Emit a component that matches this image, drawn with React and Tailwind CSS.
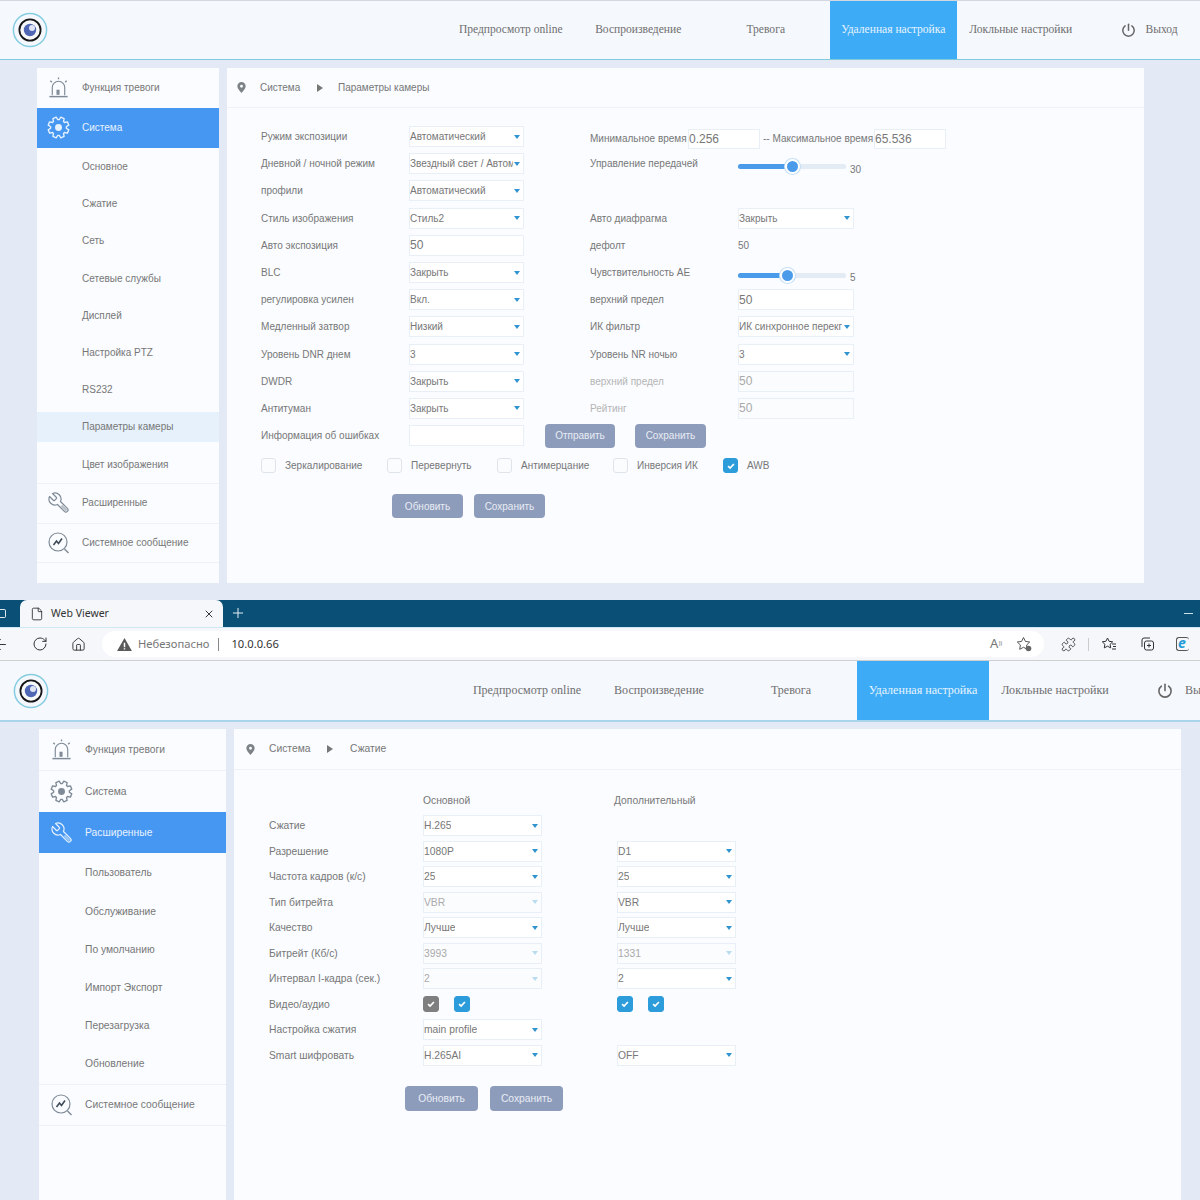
import React from 'react';
import { ArrowLeft, RotateCw, House, File, X, Plus, Puzzle } from 'lucide-react';

const SANS = "font-['Liberation_Sans',Arial,sans-serif]";

// 8 tooth gear outline, generated once
const gearPoints = (() => {
    const pts = [];
    for (let i = 0; i < 8; i++) {
        const a = (i * Math.PI) / 4 + Math.PI / 8;
        [[-0.3, 8.2], [-0.17, 11], [0.17, 11], [0.3, 8.2]].forEach(([d, r]) => {
            pts.push(`${(12 + r * Math.cos(a + d)).toFixed(2)},${(12 + r * Math.sin(a + d)).toFixed(2)}`);
        });
    }
    return pts.join(' ');
})();

function Logo() {
    return (
        <svg viewBox="0 0 36 36" className="w-[36px] h-[36px]">
            <circle cx="18" cy="18" r="16.6" fill="#f4f8fc" stroke="#86cde2" strokeWidth="1.5" />
            <circle cx="18" cy="18" r="10.6" fill="#f7f8fa" stroke="#161618" strokeWidth="1.8" />
            <circle cx="18" cy="18" r="6.2" fill="#4f66b4" />
            <circle cx="20" cy="16" r="3" fill="#dfe5f3" />
        </svg>
    );
}

function AlarmIcon() {
    return (
        <svg viewBox="0 0 24 24" fill="none" stroke="currentColor" strokeWidth="1.2" className="w-[23px] h-[23px]">
            <path d="M5.5 20V12a6.5 6.5 0 0 1 13 0v8" />
            <path d="M2.5 21.5h19" strokeWidth="1.5" />
            <path d="M10.5 19v-4h2v4z" fill="currentColor" />
            <path d="M12 1.5v2M3.5 5l1.5 1.5M20.5 5L19 6.5" strokeWidth="1.4" />
        </svg>
    );
}

function GearIcon() {
    return (
        <svg viewBox="0 0 24 24" fill="none" stroke="currentColor" strokeWidth="1.4" strokeLinejoin="round" className="w-[23px] h-[23px]">
            <polygon points={gearPoints} />
            <circle cx="12" cy="12" r="3.6" fill="currentColor" stroke="none" />
        </svg>
    );
}

function WrenchIcon() {
    return (
        <svg viewBox="0 0 24 24" fill="none" stroke="currentColor" strokeWidth="1.2" strokeLinejoin="round" className="w-[24px] h-[24px]">
            <g transform="translate(24 0) scale(-1 1)">
                <path d="M14.7 6.3a1 1 0 0 0 0 1.4l1.6 1.6a1 1 0 0 0 1.4 0l3.77-3.77a6 6 0 0 1-7.94 7.94l-6.91 6.91a2.12 2.12 0 0 1-3-3l6.91-6.91a6 6 0 0 1 7.94-7.94l-3.76 3.76z" />
                <path d="M9.5 14.5l-5 5" strokeWidth="2.2" opacity="0.55" />
            </g>
        </svg>
    );
}

function MessageIcon() {
    return (
        <svg viewBox="0 0 24 24" fill="none" stroke="currentColor" strokeWidth="1.2" className="w-[24px] h-[24px]">
            <circle cx="11" cy="11" r="9" />
            <path d="M17.5 18l4 4" strokeWidth="1.5" />
            <path d="M6.5 14l3-4 2 2.5 3.5-5" stroke="#3f4a58" strokeWidth="1.6" />
        </svg>
    );
}

function PowerIcon({ className }) {
    return (
        <svg viewBox="0 0 16 16" fill="none" stroke="#666" strokeWidth="1.6" strokeLinecap="round" className={className}>
            <path d="M8 1.2v6.4" />
            <path d="M4.4 3.1a6.1 6.1 0 1 0 7.2 0" />
        </svg>
    );
}

function Pin() {
    return (
        <svg viewBox="0 0 10 12" className="w-[9px] h-[11px]">
            <path fillRule="evenodd" d="M5 0a4.6 4.6 0 0 1 4.6 4.6C9.6 7.6 5 12 5 12S.4 7.6.4 4.6A4.6 4.6 0 0 1 5 0zm0 3a1.6 1.6 0 1 0 0 3.2A1.6 1.6 0 0 0 5 3z" fill="#7d8287" />
        </svg>
    );
}

function Breadcrumb({ className, current, nameClass, arrowClass }) {
    return (
        <div className={`flex items-center border-b border-[#eef2f8] text-[#777] ${className}`}>
            <Pin />
            <span className={`ml-[14px] ${nameClass}`}>Система</span>
            <div className={`border-y-[4px] border-l-[6px] border-y-transparent border-l-[#777] ${arrowClass}`} />
            <span>{current}</span>
        </div>
    );
}

function TopNav({ className, startClass, itemClass, textClass, exitClass, powerClass, exit }) {
    const items = ['Предпросмотр online', 'Воспроизведение', 'Тревога', 'Удаленная настройка', 'Локльные настройки'];
    return (
        <div className={`flex items-stretch bg-[#f5f8fd] font-['Liberation_Serif','Times_New_Roman',serif] ${textClass} ${className}`}>
            <div className={`flex items-center shrink-0 ${startClass}`}>
                <Logo />
            </div>
            {items.map((item, i) => (
                <div
                    key={item}
                    className={`flex items-center justify-center shrink-0 whitespace-nowrap ${itemClass} ${i === 3 ? 'bg-[#3eabf6] text-[#e8f4fe]' : 'text-[#6f6f6f]'}`}
                >
                    {item}
                </div>
            ))}
            <div className={`flex items-center shrink-0 text-[#6f6f6f] whitespace-nowrap ${exitClass}`}>
                <PowerIcon className={powerClass} />
                <span>{exit}</span>
            </div>
        </div>
    );
}

function SideRow({ icon, label, active, className }) {
    return (
        <div className={`flex items-center ${className} ${active ? 'bg-[#4697f2] text-[#e6f2ff]' : 'text-[#777]'}`}>
            <div className={`flex justify-center shrink-0 w-[43px] mr-[2px] ${active ? 'text-[#e6f2ff]' : 'text-[#7f8a96]'}`}>{icon}</div>
            <span>{label}</span>
        </div>
    );
}

function SubRow({ label, selected, className }) {
    return (
        <div className={`flex items-center ${className}`}>
            <div className={`flex items-center w-full h-[30px] pl-[45px] text-[#777] ${selected ? 'bg-[#e6f1fb]' : ''}`}>{label}</div>
        </div>
    );
}

function Select({ value, disabled, className }) {
    return (
        <div className={`flex items-center justify-between border border-[#e8eff6] pr-[3px] shrink-0 ${disabled ? 'bg-[#fbfcfe] text-[#aaa]' : 'bg-white text-[#777]'} ${className}`}>
            <span className="whitespace-nowrap overflow-hidden">{value}</span>
            <div className={`ml-[1px] shrink-0 border-x-[3px] border-t-[4px] border-x-transparent ${disabled ? 'border-t-[#b9dcf0]' : 'border-t-[#2f94d0]'}`} />
        </div>
    );
}

function Input({ value, disabled, className }) {
    return (
        <div className={`flex items-center border border-[#e8eff6] shrink-0 text-[12px] ${disabled ? 'bg-[#fbfcfe] text-[#aaa]' : 'bg-white text-[#777]'} ${className}`}>
            {value}
        </div>
    );
}

function Slider({ pct, value, valueClass }) {
    return (
        <div className="flex items-center mt-[6px]">
            <div className="relative w-[108px] h-[5px] rounded-full bg-[#e3ebf5]">
                <div className="h-full rounded-full bg-[#4a9bea]" style={{ width: `${pct}%` }} />
                <div
                    className="absolute top-[-5px] w-[15px] h-[15px] -ml-[7px] rounded-full bg-[#4a9bea] border-[2px] border-white shadow-[0_0_0_1px_#c4def5]"
                    style={{ left: `${pct}%` }}
                />
            </div>
            <span className={`ml-[4px] text-[#777] ${valueClass}`}>{value}</span>
        </div>
    );
}

function Check({ on, gray, className }) {
    const color = gray ? 'bg-[#7f7f7f] border-[#7f7f7f]' : on ? 'bg-[#2d9cdb] border-[#2d9cdb]' : 'bg-[#fbfcfe] border-[#dfe4ea]';
    return (
        <div className={`flex items-center justify-center rounded-[3px] border shrink-0 ${color} ${className}`}>
            {on && (
                <svg viewBox="0 0 12 12" fill="none" stroke="#fff" strokeWidth="2" className="w-[10px] h-[10px]">
                    <path d="M2.5 6.2l2.4 2.4 4.6-5" />
                </svg>
            )}
        </div>
    );
}

function Btn({ label, className }) {
    return (
        <div className={`flex items-center justify-center rounded-[4px] bg-[#8e9cbb] text-[#e8ecf4] shrink-0 ${className}`}>{label}</div>
    );
}

const topRows = [
    ['Дневной / ночной режим', 'Звездный свет / Автом', 'Управление передачей', <Slider pct={50} value="30" valueClass="mt-[6px]" />],
    ['профили', 'Автоматический', '', null],
    ['Стиль изображения', 'Стиль2', 'Авто диафрагма', 'Закрыть'],
    ['Авто экспозиция', { input: '50' }, 'дефолт', { text: '50' }],
    ['BLC', 'Закрыть', 'Чувствительность АЕ', <Slider pct={45} value="5" valueClass="mt-[4px]" />],
    ['регулировка усилен', 'Вкл.', 'верхний предел', { input: '50' }],
    ['Медленный затвор', 'Низкий', 'ИК фильтр', 'ИК синхронное перекг'],
    ['Уровень DNR днем', '3', 'Уровень NR ночью', '3'],
    ['DWDR', 'Закрыть', 'верхний предел', { input: '50', disabled: true }],
    ['Антитуман', 'Закрыть', 'Рейтинг', { input: '50', disabled: true }],
];

function TopControl({ c }) {
    if (c === null) return null;
    if (typeof c === 'string') return <Select value={c} className="w-[116px] h-[21px]" />;
    if (c.input) return <Input value={c.input} disabled={c.disabled} className="w-[116px] h-[21px]" />;
    if (c.text) return <span className="text-[#777]">{c.text}</span>;
    return c;
}

function CameraForm() {
    return (
        <div className="pt-[15px] pl-[34px] text-[10px] text-[#777]">
            <div className="flex items-center h-[27.2px]">
                <div className="w-[148px]">Ружим экспозиции</div>
                <Select value="Автоматический" className="w-[115px] h-[21px]" />
                <div className="flex items-center ml-[66px] mt-[4px] whitespace-nowrap">
                    <span className="w-[98px]">Минимальное время</span>
                    <Input value="0.256" className="w-[72px] h-[20px]" />
                    <span className="ml-[3px] w-[111px]">-- Максимальное время</span>
                    <Input value="65.536" className="w-[72px] h-[20px]" />
                </div>
            </div>
            {topRows.map(([label, ctrl, rightLabel, rightCtrl], i) => (
                <div key={i} className="flex items-center h-[27.2px]">
                    <div className="w-[148px]">{label}</div>
                    {typeof ctrl === 'string' ? (
                        <Select value={ctrl} className="w-[115px] h-[21px]" />
                    ) : (
                        <Input value={ctrl.input} className="w-[115px] h-[21px]" />
                    )}
                    <div className={`ml-[66px] w-[148px] ${i > 7 ? 'text-[#b5b5b5]' : ''}`}>{rightLabel}</div>
                    <TopControl c={rightCtrl} />
                </div>
            ))}
            <div className="flex items-center h-[27.2px]">
                <div className="w-[148px]">Информация об ошибках</div>
                <Input value="" className="w-[115px] h-[21px]" />
                <Btn label="Отправить" className="ml-[21px] w-[70px] h-[24px]" />
                <Btn label="Сохранить" className="ml-[20px] w-[71px] h-[24px]" />
            </div>
            <div className="flex items-center mt-[3px] h-[27px]">
                <Check className="w-[15px] h-[15px]" />
                <span className="ml-[9px] w-[102px]">Зеркалирование</span>
                <Check className="w-[15px] h-[15px]" />
                <span className="ml-[9px] w-[86px]">Перевернуть</span>
                <Check className="w-[15px] h-[15px]" />
                <span className="ml-[9px] w-[92px]">Антимерцание</span>
                <Check className="w-[15px] h-[15px]" />
                <span className="ml-[9px] w-[86px]">Инверсия ИК</span>
                <Check on className="w-[15px] h-[15px]" />
                <span className="ml-[9px]">AWB</span>
            </div>
            <div className="flex mt-[15px] ml-[131px] gap-[11px]">
                <Btn label="Обновить" className="w-[71px] h-[24px]" />
                <Btn label="Сохранить" className="w-[71px] h-[24px]" />
            </div>
        </div>
    );
}

const lowerRows = [
    ['Сжатие', 'H.265', false, ''],
    ['Разрешение', '1080P', false, 'D1'],
    ['Частота кадров (к/с)', '25', false, '25'],
    ['Тип битрейта', 'VBR', true, 'VBR'],
    ['Качество', 'Лучше', false, 'Лучше'],
    ['Битрейт (Кб/с)', '3993', true, '1331', true],
    ['Интервал I-кадра (сек.)', '2', true, '2'],
    ['Видео/аудио', 'checks', false, 'checks'],
    ['Настройка сжатия', 'main profile', false, ''],
    ['Smart шифровать', 'H.265AI', false, 'OFF'],
];

function CompressForm() {
    return (
        <div className="pl-[35px] text-[10.3px] text-[#777]">
            <div className="flex h-[21px] mt-[20px] mb-[2px] items-center">
                <span className="ml-[154px] w-[191px]">Основной</span>
                <span>Дополнительный</span>
            </div>
            {lowerRows.map(([label, first, firstOff, second, secondOff]) => (
                <div key={label} className="flex items-center h-[25.5px]">
                    <div className="w-[154px]">{label}</div>
                    {first === 'checks' ? (
                        <div className="flex w-[119px] gap-[15px]">
                            <Check on gray className="w-[16px] h-[16px]" />
                            <Check on className="w-[16px] h-[16px]" />
                        </div>
                    ) : (
                        <Select value={first} disabled={firstOff} className="w-[119px] h-[21px]" />
                    )}
                    <div className="w-[75px]" />
                    {second === 'checks' ? (
                        <div className="flex gap-[15px]">
                            <Check on className="w-[16px] h-[16px]" />
                            <Check on className="w-[16px] h-[16px]" />
                        </div>
                    ) : second ? (
                        <Select value={second} disabled={secondOff} className="w-[119px] h-[21px]" />
                    ) : null}
                </div>
            ))}
            <div className="flex mt-[18px] ml-[136px] gap-[12px]">
                <Btn label="Обновить" className="w-[73px] h-[25px]" />
                <Btn label="Сохранить" className="w-[73px] h-[25px]" />
            </div>
        </div>
    );
}

function BrowserChrome() {
    return (
        <div className="shrink-0 font-['Noto_Sans',sans-serif]">
            <div className="flex items-stretch h-[27px] bg-[#0a4f75] relative">
                <div className="w-[6px] h-[9px] mt-[9px] border-y-[1.5px] border-r-[1.5px] border-[#dbe8f0] rounded-r-[2px]" />
                <div className="flex items-center ml-[14px] w-[203px] rounded-t-[7px] bg-[#f5f7fa] pl-[10px] pr-[8px] text-[10.5px] text-[#333]">
                    <File size={14} strokeWidth={1.4} className="text-[#222]" />
                    <span className="ml-[7px] flex-1">Web Viewer</span>
                    <X size={12} strokeWidth={1.8} className="text-[#222]" />
                </div>
                <Plus size={16} strokeWidth={1.5} className="ml-[7px] mt-[5px] text-[#e4eff6]" />
                <div className="ml-auto mr-[7px] mt-[13px] w-[9px] h-[1px] bg-[#cfe0ea]" />
            </div>
            <div className="flex items-center h-[34px] bg-[#f5f7fa] border-t border-[#cfe6f4] border-b border-b-[#cfcfcf] overflow-hidden">
                <ArrowLeft size={17} strokeWidth={1.4} className="-ml-[8px] text-[#333] shrink-0" />
                <RotateCw size={16} strokeWidth={1.5} className="ml-[23px] text-[#333] shrink-0" />
                <House size={15} strokeWidth={1.5} className="ml-[23px] text-[#333] shrink-0" />
                <div className="flex items-center ml-[16px] w-[942px] h-[26px] rounded-full bg-white pl-[15px] pr-[12px] text-[11.2px] shrink-0">
                    <svg viewBox="0 0 16 14" className="w-[15px] h-[13px] shrink-0">
                        <path fillRule="evenodd" d="M8 0l8 14H0zM7.2 5v5h1.6V5zm0 6v1.5h1.6V11z" fill="#5a5a5a" />
                    </svg>
                    <span className="ml-[6px] text-[#777]">Небезопасно</span>
                    <div className="ml-[9px] w-[1px] h-[13px] bg-[#888]" />
                    <span className="ml-[12px] text-[#333]">10.0.0.66</span>
                    <span className="ml-auto text-[13px] text-[#777]">A<sup className="text-[6px]">))</sup></span>
                    <svg viewBox="0 0 16 16" fill="none" stroke="#555" strokeWidth="1" className="ml-[14px] w-[16px] h-[16px]">
                        <path d="M7.5 1.5l1.9 3.9 4.3.6-3.1 3 .7 4.3-3.8-2-3.8 2 .7-4.3-3.1-3 4.3-.6z" />
                        <circle cx="12.5" cy="12.5" r="2.8" fill="#666" stroke="none" />
                    </svg>
                </div>
                <Puzzle size={15} strokeWidth={1.4} className="ml-[17px] text-[#333] shrink-0" />
                <div className="ml-[12px] w-[1px] h-[13px] bg-[#ccc] shrink-0" />
                <svg viewBox="0 0 16 16" fill="none" stroke="#333" strokeWidth="1" className="ml-[12px] w-[16px] h-[16px] shrink-0">
                    <path d="M6.5 2l1.6 3.3 3.6.5-2.6 2.5.6 3.6-3.2-1.7-3.2 1.7.6-3.6L1.3 5.8l3.6-.5z" />
                    <path d="M11 8h4M12 10.5h3M11 13h4" />
                </svg>
                <svg viewBox="0 0 16 16" fill="none" stroke="#333" strokeWidth="1" className="ml-[22px] w-[16px] h-[16px] shrink-0">
                    <path d="M3 11V4a2 2 0 0 1 2-2h6" />
                    <rect x="5.5" y="5" width="9" height="9" rx="2" />
                    <path d="M10 7.5v4M8 9.5h4" />
                </svg>
                <div className="relative ml-[21px] w-[13px] h-[14px] border-l border-y border-[#555] rounded-[3px] shrink-0">
                    <span className="absolute left-[1px] top-[-4px] text-[14px] font-bold italic text-[#1e9ad6] leading-[18px]">e</span>
                </div>
            </div>
        </div>
    );
}

export default function App() {
    const upperSub = ['Основное', 'Сжатие', 'Сеть', 'Сетевые службы', 'Дисплей', 'Настройка PTZ', 'RS232', 'Параметры камеры', 'Цвет изображения'];
    const lowerSub = ['Пользователь', 'Обслуживание', 'По умолчанию', 'Импорт Экспорт', 'Перезагрузка', 'Обновление'];
    return (
        <div className={`w-[1200px] h-[1200px] overflow-hidden flex flex-col bg-[#e3eaf5] ${SANS}`}>
            {/* first screenshot */}
            <div className="h-[600px] shrink-0 flex flex-col">
                <TopNav
                    className="h-[60px] border-t border-[#d3d8e0] border-b border-b-[#7fcbdc] shrink-0"
                    startClass="w-[447px] pl-[12px]"
                    itemClass="w-[127.5px]"
                    textClass="text-[11.55px]"
                    exitClass="pl-[36px]"
                    powerClass="w-[15px] h-[15px] mr-[10px]"
                    exit="Выход"
                />
                <div className="flex gap-[8px] pl-[37px] pt-[8px] text-[10px]">
                    <div className="w-[182px] h-[515px] bg-[#fafcff] flex flex-col">
                        <SideRow icon={<AlarmIcon />} label="Функция тревоги" className="h-[40px] pb-[1px]" />
                        <SideRow icon={<GearIcon />} label="Система" active className="h-[40px] pb-[1px]" />
                        {upperSub.map((s) => (
                            <SubRow key={s} label={s} selected={s === 'Параметры камеры'} className="h-[37.2px]" />
                        ))}
                        <SideRow icon={<WrenchIcon />} label="Расширенные" className="h-[40px] pb-[1px] border-t border-[#edf1f7]" />
                        <SideRow icon={<MessageIcon />} label="Системное сообщение" className="h-[40px] border-y border-[#edf1f7]" />
                    </div>
                    <div className="w-[917px] h-[515px] bg-[#fafcff]">
                        <Breadcrumb
                            className="h-[40px] pl-[10px]"
                            current="Параметры камеры"
                            nameClass="w-[57px]"
                            arrowClass="mr-[15px]"
                        />
                        <CameraForm />
                    </div>
                </div>
            </div>

            {/* second screenshot */}
            <BrowserChrome />
            <TopNav
                className="h-[61px] border-b-[2px] border-b-[#a9d5ea] shrink-0"
                startClass="w-[461px] pl-[13px]"
                itemClass="w-[132px]"
                textClass="text-[12.05px]"
                exitClass="pl-[36px]"
                powerClass="w-[16px] h-[16px] mr-[12px]"
                exit="Выход"
            />
            <div className="flex gap-[8px] pl-[39px] pt-[7px] text-[10.3px] flex-1">
                <div className="w-[187px] bg-[#fafcff] flex flex-col">
                    <SideRow icon={<AlarmIcon />} label="Функция тревоги" className="h-[42px] border-b border-[#edf1f7] pl-[1px]" />
                    <SideRow icon={<GearIcon />} label="Система" className="h-[41px] pl-[1px]" />
                    <SideRow icon={<WrenchIcon />} label="Расширенные" active className="h-[41px] pl-[1px]" />
                    <div className="mt-[1px]">
                        {lowerSub.map((s) => (
                            <SubRow key={s} label={s} className="h-[38.2px] pl-[1px]" />
                        ))}
                    </div>
                    <SideRow icon={<MessageIcon />} label="Системное сообщение" className="h-[42px] mt-[1px] pl-[1px] border-y border-[#edf1f7]" />
                </div>
                <div className="w-[947px] bg-[#fafcff]">
                    <Breadcrumb
                        className="h-[41px] pl-[12px]"
                        current="Сжатие"
                        nameClass="w-[58px]"
                        arrowClass="mr-[17px]"
                    />
                    <CompressForm />
                </div>
            </div>
        </div>
    );
}
